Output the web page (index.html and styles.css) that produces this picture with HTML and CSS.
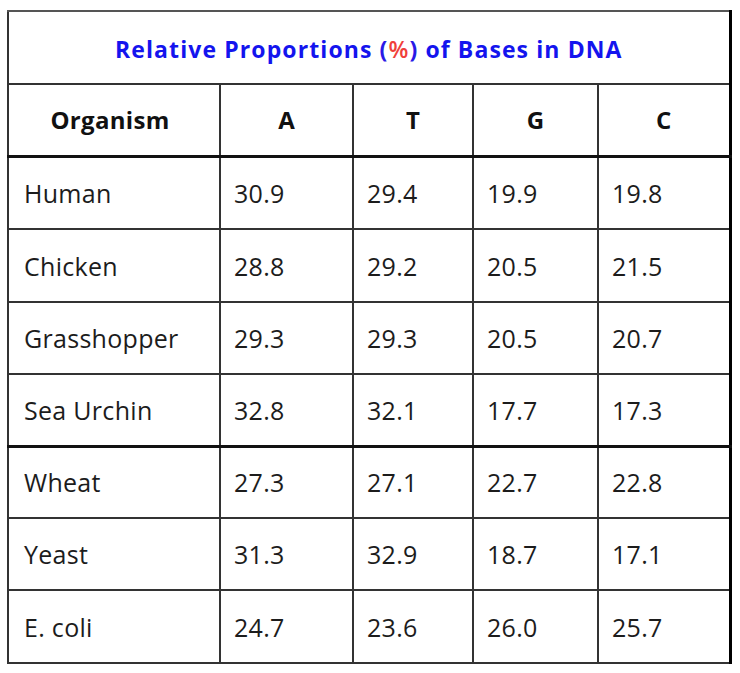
FILE: index.html
```html
<!DOCTYPE html>
<html lang="en">
<head>
<meta charset="utf-8">
<title>Relative Proportions (%) of Bases in DNA</title>
<link rel="stylesheet" href="styles.css">
</head>
<body>
<table class="dna">
  <colgroup>
    <col class="c-org">
    <col class="c-a">
    <col class="c-t">
    <col class="c-g">
    <col class="c-c">
  </colgroup>
  <thead>
    <tr class="title-row">
      <th colspan="5" class="title">Relative Proportions <span class="paren">(</span><span class="pct">%</span><span class="paren">)</span> of Bases in DNA</th>
    </tr>
    <tr class="head-row">
      <th class="col-org">Organism</th>
      <th>A</th>
      <th>T</th>
      <th class="col-g">G</th>
      <th class="col-c">C</th>
    </tr>
  </thead>
  <tbody>
    <tr class="r1"><td class="col-org">Human</td><td>30.9</td><td>29.4</td><td class="col-g">19.9</td><td class="col-c">19.8</td></tr>
    <tr class="r2"><td class="col-org">Chicken</td><td>28.8</td><td>29.2</td><td class="col-g">20.5</td><td class="col-c">21.5</td></tr>
    <tr class="r3"><td class="col-org">Grasshopper</td><td>29.3</td><td>29.3</td><td class="col-g">20.5</td><td class="col-c">20.7</td></tr>
    <tr class="r4 group-end"><td class="col-org">Sea Urchin</td><td>32.8</td><td>32.1</td><td class="col-g">17.7</td><td class="col-c">17.3</td></tr>
    <tr class="r5"><td class="col-org">Wheat</td><td>27.3</td><td>27.1</td><td class="col-g">22.7</td><td class="col-c">22.8</td></tr>
    <tr class="r6"><td class="col-org">Yeast</td><td>31.3</td><td>32.9</td><td class="col-g">18.7</td><td class="col-c">17.1</td></tr>
    <tr class="r7"><td class="col-org">E. coli</td><td>24.7</td><td>23.6</td><td class="col-g">26.0</td><td class="col-c">25.7</td></tr>
  </tbody>
</table>
</body>
</html>
```

FILE: styles.css
```css
html, body {
  margin: 0;
  padding: 0;
  background: #ffffff;
}

body {
  padding: 10px 0 0 7px;
  font-family: "Open Sans", "Noto Sans", "Liberation Sans", sans-serif;
  color: #1c1c1c;
}

.dna {
  border-collapse: collapse;
  table-layout: fixed;
  width: 722px;
}

.c-org { width: 212px; }
.c-a { width: 133px; }
.c-t { width: 120px; }
.c-g { width: 125px; }
.c-c { width: 132px; }

.dna th,
.dna td {
  border: 2px solid #333333;
  padding: 0 0 0 13px;
  vertical-align: middle;
}

.dna td {
  font-size: 25px;
  letter-spacing: 0.3px;
  font-weight: 400;
  text-align: left;
}

.dna td.col-org {
  padding-left: 15px;
}

.title-row { height: 73px; }
.head-row { height: 72px; }

.dna th {
  font-size: 24px;
  font-weight: 700;
  text-align: center;
  padding: 0;
  color: #111111;
}

.dna th.col-org {
  padding-right: 8px;
  letter-spacing: 0.3px;
}

.dna th.title {
  font-size: 23px;
  letter-spacing: 1.1px;
  font-weight: 700;
  color: #1414ee;
  border-top-color: #555555;
  padding-top: 2px;
}

.paren { color: #2a1ae6; }
.pct { color: #f0403a; font-weight: 600; }

.head-row th {
  border-bottom: 3px solid #111111;
}

.r1, .r2 { height: 73px; }
.r3, .r4, .r5, .r6 { height: 72px; }
.r7 { height: 73px; }

.group-end td {
  border-bottom: 3px solid #111111;
}

.dna .col-g {
  border-left-color: #000000;
}

.dna .col-c {
  border-left-color: #000000;
  border-right: 3px solid #000000;
}

.dna th.title {
  border-right: 3px solid #000000;
}
```
